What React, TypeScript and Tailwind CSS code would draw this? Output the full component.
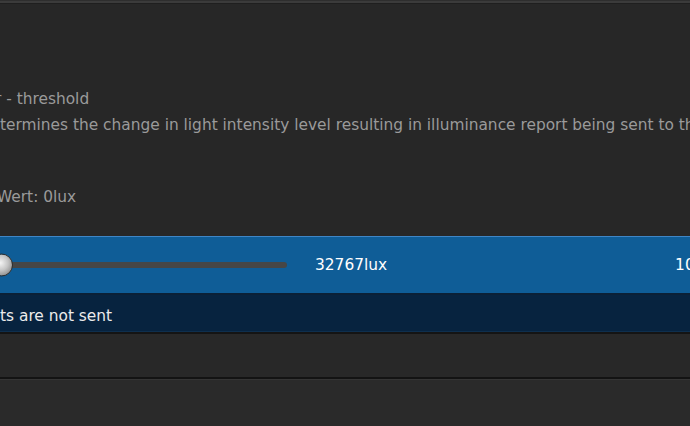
import React from "react";

export default function App() {
  return (
    <div className="w-[690px] h-[426px] overflow-hidden bg-[#272727] font-['DejaVu_Sans',sans-serif] text-[15.4px] leading-[18px]">
      <div className="h-px bg-[#2e2e2e]" />
      <div className="h-[2px] bg-[#3b3b3b]" />
      <div className="h-px bg-[#1f1f1f]" />

      <div className="pt-[86px] text-[#9a9a9a] whitespace-nowrap">
        <div className="-ml-[5px]">r - threshold</div>
        <div className="mt-[8px]">termines the change in light intensity level resulting in illuminance report being sent to the</div>
        <div className="mt-[54px] -ml-[3px]">Wert: 0lux</div>
      </div>

      <div className="mt-[30px] border-t border-[#3f86c6] bg-[#0f5d97] h-[59px] flex items-center whitespace-nowrap text-white border-b-2 border-b-[#0b2036]">
        <div className="relative -ml-[20px] w-[307px] h-[6px] rounded-full bg-[#464646] shrink-0">
          <div className="absolute left-[10px] top-1/2 -translate-y-1/2 w-[23px] h-[23px] rounded-full border border-[#2e2e2e] bg-[radial-gradient(circle_at_45%_40%,#f4f4f4_0%,#c4c4c4_45%,#858585_85%,#555555_100%)]" />
        </div>
        <div className="ml-[28px] shrink-0">32767lux</div>
        <div className="ml-[288px] shrink-0">100000lux</div>
      </div>

      <div className="bg-[#07233f] h-[37px] pt-[12px] text-[#ececec] whitespace-nowrap border-b border-b-[#0e2f4e]">
        <div>ts are not sent</div>
      </div>
      <div className="h-[2px] bg-[#141414]" />
      <div className="h-[43px] bg-[#282828]" />
      <div className="h-[2px] bg-[#131313]" />
      <div className="h-px bg-[#353535]" />
      <div className="bg-[#2a2a2a] h-[60px]" />
    </div>
  );
}
